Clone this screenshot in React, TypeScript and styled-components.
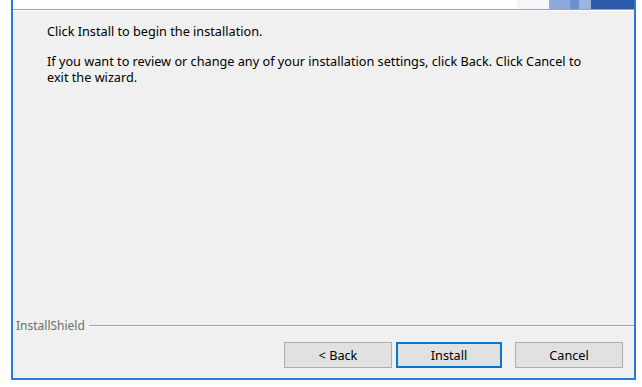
import React from "react";
import styled, { createGlobalStyle } from "styled-components";

const GlobalStyle = createGlobalStyle`
  html, body {
    margin: 0;
    padding: 0;
    background: #ffffff;
  }
  body {
    font-family: "Segoe UI", "Noto Sans", "Liberation Sans", sans-serif;
    font-size: 12.7px;
    color: #000;
  }
`;

const Page = styled.div`
  width: 642px;
  height: 387px;
  overflow: hidden;
  padding-left: 11px;
  box-sizing: border-box;
`;

const Window = styled.div`
  width: 625px;
  height: 380px;
  box-sizing: border-box;
  border: 2px solid #2b7bd3;
  border-top: none;
  background: #f0f0f0;
  display: flex;
  flex-direction: column;
`;

const Header = styled.div`
  height: 9px;
  background: #ffffff;
  border-bottom: 1px solid #a0a0a0;
  box-shadow: 0 1px 0 #ffffff;
  display: flex;
  justify-content: flex-end;
`;

const Banner = styled.div`
  display: flex;
  height: 100%;
`;

const Block = styled.div<{ $w: number; $c: string }>`
  width: ${(p) => p.$w}px;
  background: ${(p) => p.$c};
`;

const Body = styled.div`
  flex: 1;
  padding: 13px 0 0 34px;
  display: flex;
  flex-direction: column;
`;

const Para = styled.p`
  margin: 0 0 14px 0;
  line-height: 16px;
  width: 545px;
`;

const Footer = styled.div`
  display: flex;
  flex-direction: column;
  padding: 0 11px 10px 3px;
`;

const Brand = styled.div`
  display: flex;
  align-items: center;
  gap: 4px;
  color: #6d6d6d;
  font-size: 12px;
  height: 16px;
  margin-right: -11px;
`;

const Rule = styled.div`
  flex: 1;
  height: 1px;
  background: #a0a0a0;
  box-shadow: 0 1px 0 #ffffff;
`;

const Buttons = styled.div`
  display: flex;
  justify-content: flex-end;
  margin-top: 9px;
`;

const Button = styled.button<{ $primary?: boolean; $gap?: number; $w?: number }>`
  width: ${(p) => p.$w ?? 108}px;
  height: 26px;
  margin-left: ${(p) => p.$gap ?? 0}px;
  box-sizing: border-box;
  font-family: inherit;
  font-size: 12.7px;
  color: #000;
  background: #e1e1e1;
  border: ${(p) => (p.$primary ? "2px solid #0078d7" : "1px solid #adadad")};
  padding: 0;
`;

export default function App() {
  return (
    <>
      <GlobalStyle />
      <Page>
        <Window>
          <Header>
            <Banner>
              <Block $w={32} $c="#f3f6fb" />
              <Block $w={21} $c="#8eaad8" />
              <Block $w={9} $c="#6c91cf" />
              <Block $w={12} $c="#9db6e0" />
              <Block $w={43} $c="#2a5aa8" />
            </Banner>
          </Header>
          <Body>
            <Para>Click Install to begin the installation.</Para>
            <Para>
              If you want to review or change any of your installation settings, click Back. Click Cancel to
              exit the wizard.
            </Para>
          </Body>
          <Footer>
            <Brand>
              InstallShield
              <Rule />
            </Brand>
            <Buttons>
              <Button>&lt; Back</Button>
              <Button $primary $gap={4} $w={106}>Install</Button>
              <Button $gap={13}>Cancel</Button>
            </Buttons>
          </Footer>
        </Window>
      </Page>
    </>
  );
}
